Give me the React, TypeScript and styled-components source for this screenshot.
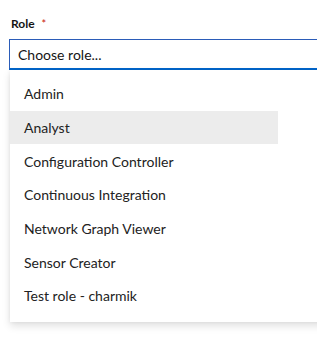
import styled, { createGlobalStyle } from "styled-components";

const GlobalStyle = createGlobalStyle`
  html, body {
    margin: 0;
    padding: 0;
    background: #ffffff;
  }
  body {
    font-family: Lato, "Liberation Sans", sans-serif;
    color: #151515;
  }
`;

const Page = styled.div`
  width: 317px;
  overflow: hidden;
  padding: 17px 0 20px 9px;
  box-sizing: border-box;
`;

const Label = styled.div`
  display: flex;
  gap: 7px;
  align-items: baseline;
  font-size: 12px;
  line-height: 14px;
  font-weight: 700;
  margin-bottom: 8px;
  padding-left: 2px;
`;

const Required = styled.span`
  color: #c9190b;
  font-weight: 400;
  font-size: 11px;
`;

const Toggle = styled.div`
  width: 360px;
  height: 31px;
  box-sizing: border-box;
  display: flex;
  align-items: center;
  padding: 0 8px;
  border: 1px solid #2b5cb8;
  border-bottom: 2px solid #0066cc;
  font-size: 14px;
`;

const Menu = styled.ul`
  list-style: none;
  margin: 0 0 0 1px;
  padding: 7px 0 9px;
  width: 360px;
  background: #ffffff;
  box-shadow: 0 4px 8px rgba(3, 3, 3, 0.12), 0 0 4px rgba(3, 3, 3, 0.06);
`;

const Item = styled.li<{ $hover?: boolean }>`
  width: 268px;
  height: 33.7px;
  display: flex;
  align-items: center;
  padding-left: 14px;
  box-sizing: border-box;
  font-size: 14px;
  color: #222;
  background: ${(p) => (p.$hover ? "#ececec" : "transparent")};
`;

const roles = [
  "Admin",
  "Analyst",
  "Configuration Controller",
  "Continuous Integration",
  "Network Graph Viewer",
  "Sensor Creator",
  "Test role - charmik",
];

function App() {
  return (
    <>
      <GlobalStyle />
      <Page>
        <Label>
          Role <Required>*</Required>
        </Label>
        <Toggle>Choose role...</Toggle>
        <Menu>
          {roles.map((r) => (
            <Item key={r} $hover={r === "Analyst"}>
              {r}
            </Item>
          ))}
        </Menu>
      </Page>
    </>
  );
}

export default App;
